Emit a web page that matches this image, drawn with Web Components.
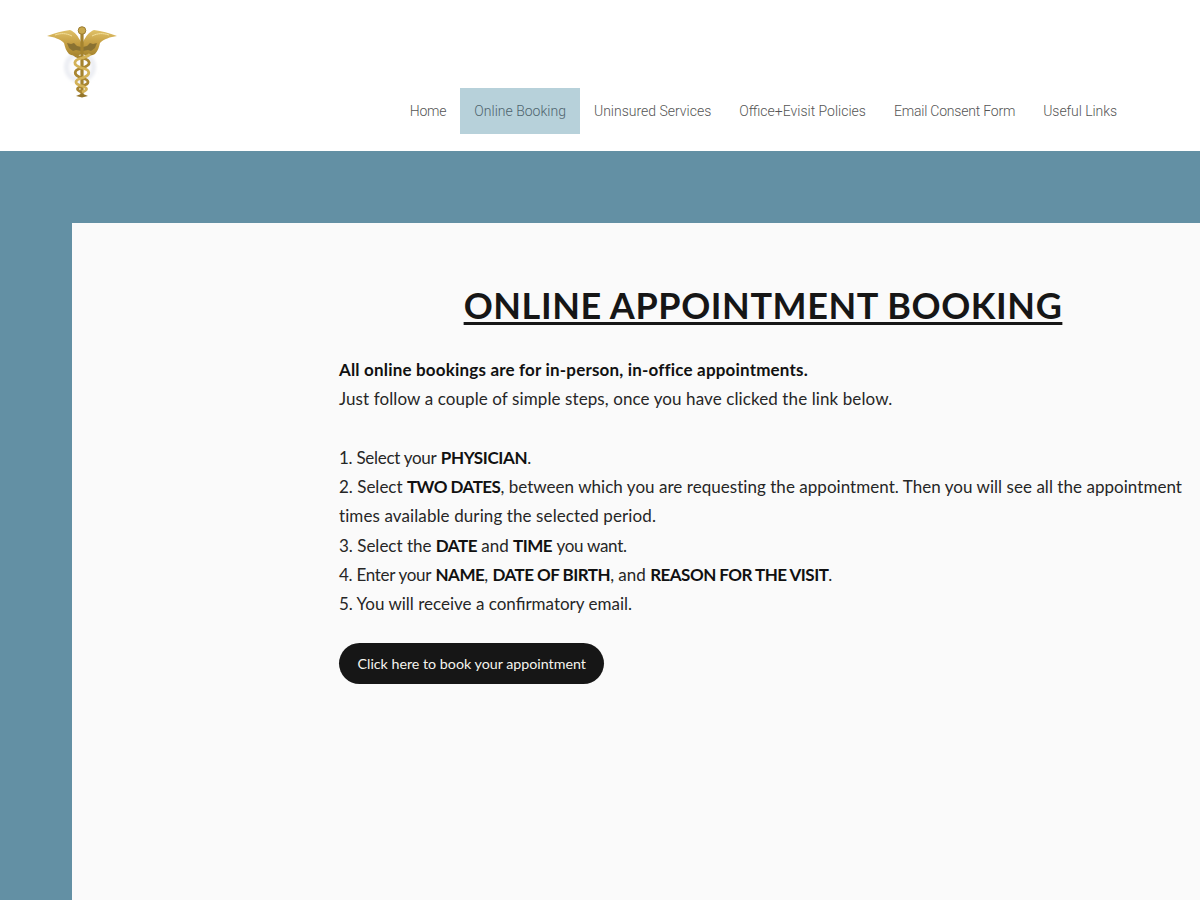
<!DOCTYPE html>
<html>
<head>
<meta charset="utf-8">
<title>Online Booking</title>
<style>
    html, body { margin: 0; padding: 0; background: #6390a4; }
    body { height: 900px; overflow: hidden; }
    booking-content b { color: #111; letter-spacing: -0.38px; }
    booking-content b.lead { letter-spacing: 0.18px; }
    booking-content b.caps { letter-spacing: -0.52px; }
    booking-content .wide { letter-spacing: 0.1px; }
    booking-content .slight { letter-spacing: 0.04px; }
    booking-content .tight { letter-spacing: -0.28px; }
</style>
</head>
<body>
<site-header>
    <nav-link style="letter-spacing: -0.2px">Home</nav-link>
    <nav-link active>Online Booking</nav-link>
    <nav-link>Uninsured Services</nav-link>
    <nav-link>Office+Evisit Policies</nav-link>
    <nav-link style="letter-spacing: -0.2px">Email Consent Form</nav-link>
    <nav-link style="letter-spacing: -0.07px">Useful Links</nav-link>
</site-header>
<page-panel>
    <booking-content>
        <span slot="title">ONLINE APPOINTMENT BOOKING</span>
        <p><b class="lead">All online bookings are for in-person, in-office appointments.</b><br>
        <span class="wide">Just follow a couple of simple steps, once you have clicked the link below.</span><br>
        <br>
        <span class="tight">1. Select your</span> <b>PHYSICIAN</b>.<br>
        2. Select <b class="caps">TWO DATES</b>, <span class="slight">between which you are requesting the appointment. Then you will see all the appointment</span> <span class="wide">times available during the selected period.</span><br>
        3. Select the <b class="caps">DATE</b> and <b class="caps">TIME</b> <span class="tight">you want.</span><br>
        <span class="tight">4. Enter your</span> <b class="caps">NAME</b>, <b class="caps">DATE OF BIRTH</b>, and <b class="caps">REASON FOR THE VISIT</b>.<br>
        5. You will receive a confirmatory email.</p>
        <pill-button slot="action">Click here to book your appointment</pill-button>
    </booking-content>
</page-panel>
<script>
class SiteHeader extends HTMLElement {
    constructor() {
        super()
        this.attachShadow({ mode: 'open' })
    }

    connectedCallback() {
        this.shadowRoot.innerHTML = `
            <style>
                :host {
                    display: flex;
                    justify-content: space-between;
                    height: 151px;
                    background: #fff;
                    box-sizing: border-box;
                    padding: 25px 69px 0 46px;
                }
                svg { display: block; width: 72px; height: 74px; }
                nav { display: flex; align-items: flex-start; padding-top: 63px; }
            </style>
            <svg viewBox="0 0 72 74">
                <defs>
                    <linearGradient id="gold" x1="0" y1="0" x2="0" y2="1">
                        <stop offset="0" stop-color="#e0c168"/>
                        <stop offset="0.5" stop-color="#c6a044"/>
                        <stop offset="1" stop-color="#a8862f"/>
                    </linearGradient>
                    <filter id="soft"><feGaussianBlur stdDeviation="0.4"/></filter>
                    <filter id="halo"><feGaussianBlur stdDeviation="1.5"/></filter>
                </defs>
                <g filter="url(#halo)">
                    <circle cx="34" cy="42" r="16" fill="#eceef3"/>
                    <circle cx="34" cy="42" r="11" fill="#fcfcfd"/>
                </g>
                <g filter="url(#soft)">
                    <path d="M35 17 C32 11 29 7 24 5 C16 6 9 8 1 11 C8 12 14 14 18 18 C19 22 20 26 23 29 C27 31 32 31 35 29 Z" fill="url(#gold)"/>
                    <path d="M37 17 C40 11 43 7 48 5 C56 6 63 8 71 11 C64 12 58 14 54 18 C53 22 52 26 49 29 C45 31 40 31 37 29 Z" fill="url(#gold)"/>
                    <path d="M21 18 L25 19 L28 18 L31 21 L35 22 L35 26 L30 25 L27 26 L23 23 Z M51 18 L47 19 L44 18 L41 21 L37 22 L37 26 L42 25 L45 26 L49 23 Z" fill="#8a7233"/>
                    <path d="M9 10 C15 8 20 8 26 11 M46 11 C52 8 57 8 63 10" fill="none" stroke="#f2de98" stroke-width="1"/>
                    <rect x="34.4" y="8" width="3.2" height="62" fill="#a5832f"/>
                    <circle cx="36" cy="5.5" r="3.8" fill="#c9a84e" stroke="#94752a" stroke-width="0.9"/>
                    <path d="M28 29 C29 31 33 32 36 33 C45 35 46 40 36 43 C27 45 27 50 36 53 C44 55 44 59 36 61 C30 63 30 65 36 67" fill="none" stroke="#a98630" stroke-width="2.8"/>
                    <path d="M44 29 C43 31 39 32 36 33 C27 35 26 40 36 43 C45 45 45 50 36 53 C28 55 28 59 36 61 C42 63 42 65 36 67" fill="none" stroke="#d3b258" stroke-width="2.8"/>
                    <path d="M30 71 L36 68.5 L42 71 L36 72.5 Z" fill="#94752a"/>
                </g>
            </svg>
            <nav><slot></slot></nav>
        `
    }
}

class NavLink extends HTMLElement {
    constructor() {
        super()
        this.attachShadow({ mode: 'open' })
    }

    connectedCallback() {
        this.shadowRoot.innerHTML = `
            <style>
                :host {
                    display: block;
                    height: 46px;
                    padding: 0 14px;
                    font: 300 14px/47px Roboto, "Liberation Sans", sans-serif;
                    color: #555;
                    white-space: nowrap;
                }
                :host([active]) { background: #b7d1da; color: #4f646e; }
            </style>
            <slot></slot>
        `
    }
}

class PagePanel extends HTMLElement {
    constructor() {
        super()
        this.attachShadow({ mode: 'open' })
    }

    connectedCallback() {
        this.shadowRoot.innerHTML = `
            <style>
                :host {
                    display: block;
                    margin: 72px 0 0 72px;
                    height: 677px;
                    background: #fafafa;
                    box-sizing: border-box;
                    padding: 0 13px 0 267px;
                }
            </style>
            <slot></slot>
        `
    }
}

class BookingContent extends HTMLElement {
    constructor() {
        super()
        this.attachShadow({ mode: 'open' })
    }

    connectedCallback() {
        this.shadowRoot.innerHTML = `
            <style>
                :host {
                    display: block;
                    padding-top: 58px;
                    font: 17px/29.3px Lato, sans-serif;
                    color: #262626;
                }
                h1 {
                    margin: 0 0 26px;
                    text-align: center;
                    color: #161616;
                    font: 700 36px/48px Lato, sans-serif;
                    letter-spacing: 0.58px;
                    text-decoration: underline;
                    text-decoration-thickness: 3px;
                    text-underline-offset: 3px;
                }
                .action { margin-top: 24px; }
                ::slotted(p) { margin: 0; }
            </style>
            <h1><slot name="title"></slot></h1>
            <slot></slot>
            <div class="action"><slot name="action"></slot></div>
        `
    }
}

class PillButton extends HTMLElement {
    constructor() {
        super()
        this.attachShadow({ mode: 'open' })
    }

    connectedCallback() {
        this.shadowRoot.innerHTML = `
            <style>
                :host {
                    display: inline-block;
                    height: 41px;
                    padding: 0 18.5px;
                    border-radius: 21px;
                    background: #161616;
                    color: #f4f4ee;
                    font: 14.25px/41px Lato, sans-serif;
                    cursor: pointer;
                }
            </style>
            <slot></slot>
        `
    }
}

customElements.define('site-header', SiteHeader)
customElements.define('nav-link', NavLink)
customElements.define('page-panel', PagePanel)
customElements.define('booking-content', BookingContent)
customElements.define('pill-button', PillButton)
</script>
</body>
</html>
